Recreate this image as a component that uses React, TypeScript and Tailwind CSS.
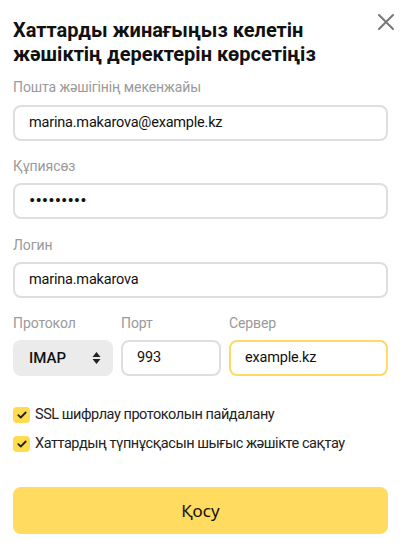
import React from "react";

const font = { fontFamily: 'Roboto, "Noto Sans", sans-serif' };

function Label({ children }: { children: React.ReactNode }) {
  return <div className="text-[14px] leading-[18px] text-[#9a9a9a] tracking-[-0.1px]">{children}</div>;
}

function Field({ value, className = "" }: { value: string; className?: string }) {
  return (
    <div
      className={`h-[36px] flex items-center rounded-[8px] border-2 border-[#dedede] px-[14px] text-[14.5px] tracking-[-0.2px] text-[#111] bg-white ${className}`}
    >
      {value}
    </div>
  );
}

function Check({ children }: { children: React.ReactNode }) {
  return (
    <div className="flex items-center gap-[5px]">
      <div className="w-[17px] h-[16px] rounded-[4px] bg-[#ffdb4d] flex items-center justify-center">
        <svg width="10" height="8" viewBox="0 0 10 8" fill="none">
          <path d="M1.3 4.2 L3.8 6.5 L8.7 1.5" stroke="#222" strokeWidth="1.8" strokeLinecap="round" strokeLinejoin="round" />
        </svg>
      </div>
      <span className="text-[14.5px] leading-[18px] tracking-[-0.45px] text-[#222]">{children}</span>
    </div>
  );
}

export default function App() {
  return (
    <div className="relative w-[404px] h-[551px] bg-white pl-[13px] pr-[16px] pt-[18px]" style={font}>
      <button className="absolute right-[9px] top-[13px] w-[18px] h-[18px] flex items-center justify-center">
        <svg width="18" height="18" viewBox="0 0 18 18">
          <path d="M2 2 L16 16 M16 2 L2 16" stroke="#777" strokeWidth="2" strokeLinecap="round" />
        </svg>
      </button>
      <h1 className="text-[20px] leading-[24px] font-bold text-[#111] pr-[24px]">
        Хаттарды жинағыңыз келетін жәшіктің деректерін көрсетіңіз
      </h1>

      <div className="mt-[12px] flex flex-col">
        <Label>Пошта жәшігінің мекенжайы</Label>
        <Field value="marina.makarova@example.kz" className="mt-[9px]" />

        <div className="mt-[16px]">
          <Label>Құпиясөз</Label>
        </div>
        <Field value="•••••••••" className="mt-[8px] !text-[19px] !tracking-[0px]" />

        <div className="mt-[17px]">
          <Label>Логин</Label>
        </div>
        <Field value="marina.makarova" className="mt-[8px]" />

        <div className="mt-[16px] flex gap-[8px]">
          <div className="w-[100px] flex flex-col gap-[8px]">
            <Label>Протокол</Label>
            <div className="h-[36px] rounded-[8px] bg-[#ebebeb] flex items-center justify-between pl-[16px] pr-[12px]">
              <span className="text-[15px] font-medium text-[#111]">IMAP</span>
              <svg width="9" height="14" viewBox="0 0 9 14">
                <path d="M4.5 1 L8.5 6 L0.5 6 Z" fill="#222" />
                <path d="M4.5 13 L8.5 8 L0.5 8 Z" fill="#222" />
              </svg>
            </div>
          </div>
          <div className="w-[100px] flex flex-col gap-[8px]">
            <Label>Порт</Label>
            <Field value="993" />
          </div>
          <div className="flex-1 flex flex-col gap-[8px]">
            <Label>Сервер</Label>
            <Field value="example.kz" className="border-[#ffd966]" />
          </div>
        </div>

        <div className="mt-[30px] flex flex-col gap-[11px]">
          <Check>SSL шифрлау протоколын пайдалану</Check>
          <Check>Хаттардың түпнұсқасын шығыс жәшікте сақтау</Check>
        </div>

        <button className="mt-[34px] h-[47px] rounded-[8px] bg-[#ffdb60] text-[17px] text-[#111] flex items-center justify-center font-['Noto_Sans',sans-serif]">
          Қосу
        </button>
      </div>
    </div>
  );
}
